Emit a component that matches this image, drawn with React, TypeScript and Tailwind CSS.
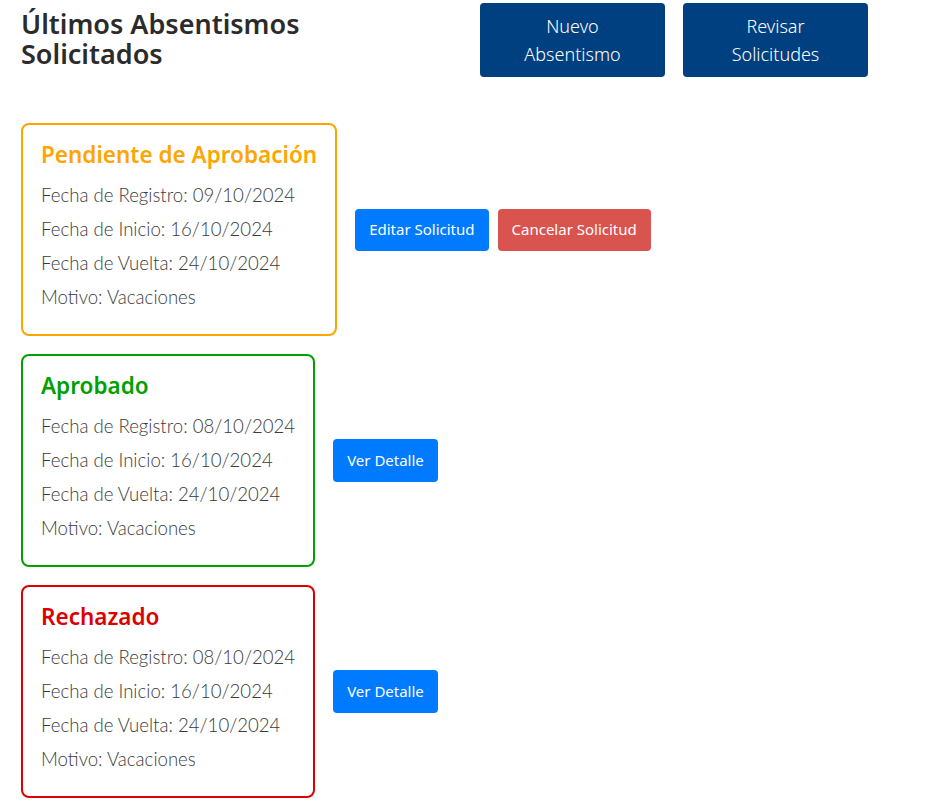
import React from "react";

type Card = {
  estado: string;
  color: "orange" | "green" | "red";
  registro: string;
  kind: "pending" | "done";
};

const cards: Card[] = [
  { estado: "Pendiente de Aprobación", color: "orange", registro: "09/10/2024", kind: "pending" },
  { estado: "Aprobado", color: "green", registro: "08/10/2024", kind: "done" },
  { estado: "Rechazado", color: "red", registro: "08/10/2024", kind: "done" },
];

const borderFor: Record<Card["color"], string> = {
  orange: "border-[#FFA500] text-[#FFA500]",
  green: "border-[#00A000] text-[#00A000]",
  red: "border-[#DD0000] text-[#DD0000]",
};

const headerBtn =
  "h-[74px] rounded-[4px] bg-[#004080] text-white text-[18px] leading-[28px] font-light font-['Noto_Sans',sans-serif]";
const smallBtn =
  "h-[42px] px-[14px] rounded-[4px] text-white text-[15px] font-['Noto_Sans',sans-serif]";

export default function App() {
  return (
    <div className="w-[952px] min-h-[801px] bg-white pl-[21px] text-[#333] font-['Lato',sans-serif]">
      <div className="grid grid-cols-[441px_185px_185px] gap-x-[18px] items-start pt-[3px]">
        <h1 className="w-[310px] pt-[6px] text-[27px] leading-[30px] font-semibold text-[#2b2b2b] font-['Noto_Sans',sans-serif]">
          Últimos Absentismos Solicitados
        </h1>
        <button className={headerBtn}>
          Nuevo
          <br />
          Absentismo
        </button>
        <button className={headerBtn}>
          Revisar
          <br />
          Solicitudes
        </button>
      </div>

      <div className="mt-[46px] flex flex-col gap-[18px]">
        {cards.map((c, i) => (
          <div key={i} className="flex items-center gap-[18px]">
            <div
              className={`rounded-[8px] border-2 bg-white pt-[16px] pb-[20px] px-[18px] ${borderFor[c.color]}`}
            >
              <div className="text-[22.5px] leading-[28px] font-semibold mb-[9px] font-['Noto_Sans',sans-serif]">
                {c.estado}
              </div>
              <div className="text-[18.6px] leading-[34px] text-[#3a3a3a] font-light">
                <div>Fecha de Registro: {c.registro}</div>
                <div>Fecha de Inicio: 16/10/2024</div>
                <div>Fecha de Vuelta: 24/10/2024</div>
                <div>Motivo: Vacaciones</div>
              </div>
            </div>
            {c.kind === "pending" ? (
              <div className="flex gap-[9px]">
                <button className={`${smallBtn} bg-[#007BFF]`}>Editar Solicitud</button>
                <button className={`${smallBtn} bg-[#D9534F]`}>Cancelar Solicitud</button>
              </div>
            ) : (
              <button className={`${smallBtn} h-[43px] bg-[#007BFF]`}>Ver Detalle</button>
            )}
          </div>
        ))}
      </div>
    </div>
  );
}
